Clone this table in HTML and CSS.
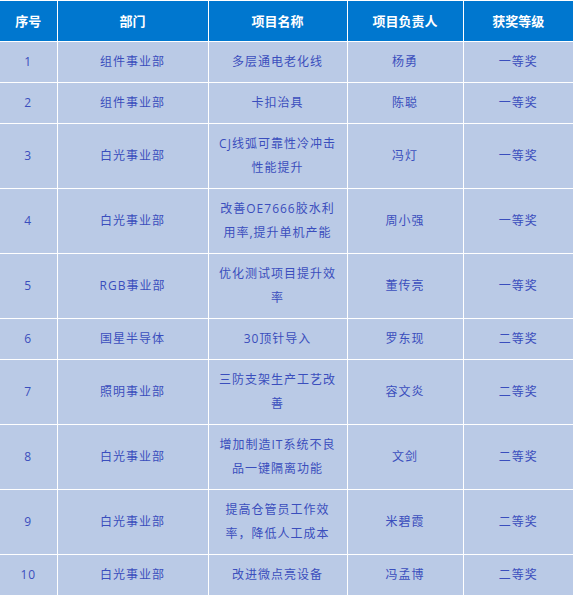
FILE: index.html
```html
<!DOCTYPE html>
<html lang="zh-CN">
<head>
<meta charset="utf-8">
<title>获奖项目</title>
<link rel="stylesheet" href="styles.css">
</head>
<body>
<table class="awards">
  <colgroup>
    <col class="c-no">
    <col class="c-dept">
    <col class="c-name">
    <col class="c-owner">
    <col class="c-level">
  </colgroup>
  <thead>
    <tr><th>序号</th><th>部门</th><th>项目名称</th><th>项目负责人</th><th>获奖等级</th></tr>
  </thead>
  <tbody>
    <tr><td>1</td><td>组件事业部</td><td>多层通电老化线</td><td>杨勇</td><td>一等奖</td></tr>
    <tr><td>2</td><td>组件事业部</td><td>卡扣治具</td><td>陈聪</td><td>一等奖</td></tr>
    <tr><td>3</td><td>白光事业部</td><td>CJ线弧可靠性冷冲击<br>性能提升</td><td>冯灯</td><td>一等奖</td></tr>
    <tr><td>4</td><td>白光事业部</td><td>改善OE7666胶水利<br>用率,提升单机产能</td><td>周小强</td><td>一等奖</td></tr>
    <tr><td>5</td><td>RGB事业部</td><td>优化测试项目提升效<br>率</td><td>董传亮</td><td>一等奖</td></tr>
    <tr><td>6</td><td>国星半导体</td><td>30顶针导入</td><td>罗东现</td><td>二等奖</td></tr>
    <tr><td>7</td><td>照明事业部</td><td>三防支架生产工艺改<br>善</td><td>容文炎</td><td>二等奖</td></tr>
    <tr><td>8</td><td>白光事业部</td><td>增加制造IT系统不良<br>品一键隔离功能</td><td>文剑</td><td>二等奖</td></tr>
    <tr><td>9</td><td>白光事业部</td><td>提高仓管员工作效<br>率，降低人工成本</td><td>米碧霞</td><td>二等奖</td></tr>
    <tr><td>10</td><td>白光事业部</td><td>改进微点亮设备</td><td>冯孟博</td><td>二等奖</td></tr>
  </tbody>
</table>
</body>
</html>
```

FILE: styles.css
```css
html, body {
  margin: 0;
  padding: 0;
  background: #ffffff;
}

.awards {
  width: 573px;
  table-layout: fixed;
  border-collapse: collapse;
  font-family: "Open Sans", "Noto Sans CJK SC", sans-serif;
  font-size: 12px;
  letter-spacing: 1px;
  text-align: center;
}

.c-no { width: 57px; }
.c-dept { width: 151px; }
.c-name { width: 139px; }
.c-owner { width: 116px; }
.c-level { width: 110px; }

.awards th,
.awards td {
  border: 1px solid #ffffff;
  padding: 8px 6px;
  line-height: 24px;
  vertical-align: middle;
}

.awards tr > :first-child { border-left: none; }
.awards tr > :last-child { border-right: none; }
.awards tbody tr:last-child td { border-bottom: none; }

.awards th {
  background: #0077cf;
  color: #ffffff;
  font-weight: bold;
  font-size: 13px;
  letter-spacing: 0;
}

.awards td {
  background: #bacae6;
  color: #3a4ebd;
}
```
